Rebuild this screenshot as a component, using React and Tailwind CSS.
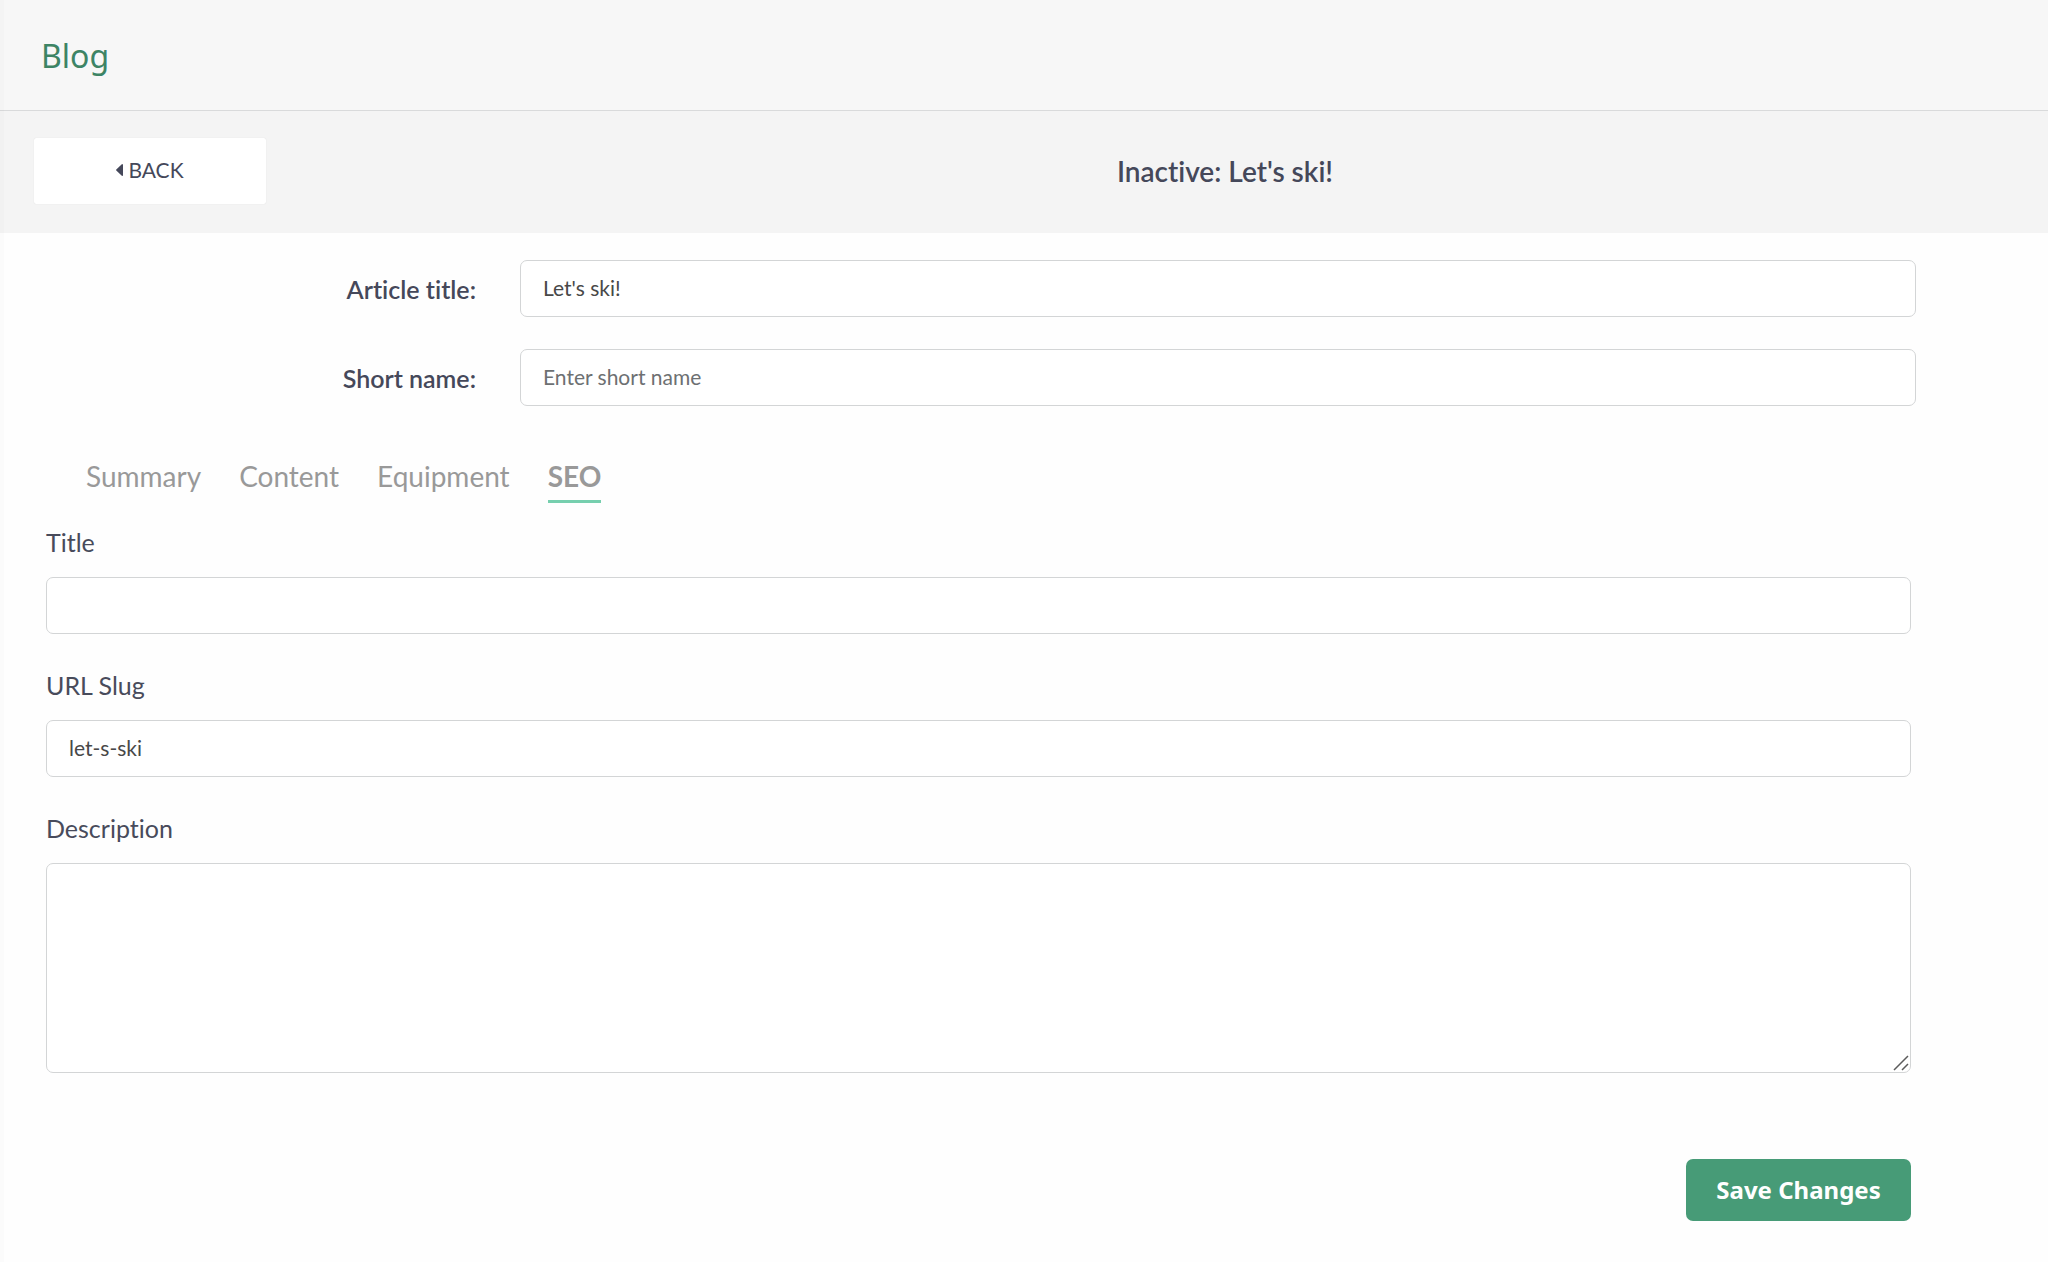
import React, { useState } from "react";

const TABS = ["Summary", "Content", "Equipment", "SEO"];

const inputClass =
  "block w-full h-[57px] px-[22px] pb-[2px] border border-[#d3d5d6] rounded-[7px] bg-white text-[21px] text-[#484848] placeholder:text-[#6d7072] outline-none";

const HeaderField = ({ id, label, value, onChange, placeholder }) => (
  <div className="flex items-center gap-11">
    <label htmlFor={id} className="w-[476px] shrink-0 text-right text-[25px] leading-8 font-semibold text-[#45485a]">
      {label}
    </label>
    <input
      id={id}
      type="text"
      value={value}
      onChange={(e) => onChange(e.target.value)}
      placeholder={placeholder}
      className={inputClass}
    />
  </div>
);

const SeoField = ({ id, label, children }) => (
  <div>
    <label htmlFor={id} className="block mb-[19px] text-[25px] leading-8 text-[#484b5b]">
      {label}
    </label>
    {children}
  </div>
);

const App = () => {
  const [title, setTitle] = useState("Let's ski!");
  const [shortName, setShortName] = useState("");
  const [activeTab, setActiveTab] = useState("SEO");
  const [seo, setSeo] = useState({ title: "", slug: "let-s-ski", description: "" });

  const updateSeo = (key) => (e) => setSeo({ ...seo, [key]: e.target.value });

  return (
    <div className="relative min-h-screen bg-[#fefefe] font-[Lato,sans-serif] [font-variant-ligatures:none]">
      <div className="absolute inset-y-0 left-0 w-1 bg-black/1 pointer-events-none" />

      <header className="flex items-center h-[111px] px-[41px] pt-[2px] border-b border-[#d9dadb] bg-[#f7f7f7]">
        <h1 className="text-[32px] leading-10 text-[#3d8465] font-['Noto_Sans',sans-serif]">Blog</h1>
      </header>

      <div className="flex items-center h-[122px] pb-[2px] bg-[#f4f4f4]">
        <div className="w-[402px] shrink-0 pl-[34px]">
          <button
            type="button"
            className="flex items-center justify-center gap-[5px] w-[232px] h-[66px] pb-[2px] rounded-[2px] bg-white text-[21px] text-[#45485a] shadow-[0_0_1px_rgba(0,0,0,0.15)]"
          >
            <svg className="w-[7px] h-3" viewBox="0 0 7 12" fill="currentColor" aria-hidden="true">
              <path d="M7 .8v10.4a.7.7 0 0 1-1.2.5L.3 6.5a.7.7 0 0 1 0-1L5.8.3A.7.7 0 0 1 7 .8z" />
            </svg>
            BACK
          </button>
        </div>
        <h2 className="flex-1 text-center text-[28px] leading-9 font-semibold text-[#45485a]">Inactive: {title}</h2>
      </div>

      <main className="pt-[27px] pb-10">
        <div className="flex flex-col gap-8 pr-[132px]">
          <HeaderField id="article-title" label="Article title:" value={title} onChange={setTitle} />
          <HeaderField
            id="short-name"
            label="Short name:"
            value={shortName}
            onChange={setShortName}
            placeholder="Enter short name"
          />
        </div>

        <nav className="flex gap-[38px] mt-[52px] pl-[86px]">
          {TABS.map((tab) => (
            <button
              key={tab}
              type="button"
              onClick={() => setActiveTab(tab)}
              className={`h-[45px] text-[28px] leading-9 pb-[6px] text-[#999999] border-b-3 ${
                tab === activeTab ? "font-bold border-[#76cfae]" : "border-transparent"
              }`}
            >
              {tab}
            </button>
          ))}
        </nav>

        <form className="pl-[46px] pr-[137px] mt-[23px]" onSubmit={(e) => e.preventDefault()}>
          <div className="flex flex-col gap-[35px]">
            <SeoField id="seo-title" label="Title">
              <input id="seo-title" type="text" value={seo.title} onChange={updateSeo("title")} className={inputClass} />
            </SeoField>
            <SeoField id="seo-slug" label="URL Slug">
              <input id="seo-slug" type="text" value={seo.slug} onChange={updateSeo("slug")} className={inputClass} />
            </SeoField>
            <SeoField id="seo-description" label="Description">
              <div className="relative">
                <textarea
                  id="seo-description"
                  value={seo.description}
                  onChange={updateSeo("description")}
                  className="block w-full h-[210px] px-[22px] py-4 border border-[#d3d5d6] rounded-[7px] bg-white text-[21px] text-[#484848] outline-none resize-none"
                />
                <svg
                  className="absolute right-[2px] bottom-[2px] w-4 h-4 text-[#5c5c5c] pointer-events-none"
                  viewBox="0 0 16 16"
                  fill="none"
                  stroke="currentColor"
                  strokeWidth="1.5"
                  aria-hidden="true"
                >
                  <path d="M1 15 15 1M9 15l6-6" />
                </svg>
              </div>
            </SeoField>
          </div>

          <div className="flex justify-end mt-[86px]">
            <button
              type="submit"
              className="w-[225px] h-[62px] rounded-[7px] bg-[#479b77] text-2xl font-bold text-white font-['Noto_Sans',sans-serif]"
            >
              Save Changes
            </button>
          </div>
        </form>
      </main>
    </div>
  );
};

export default App;
